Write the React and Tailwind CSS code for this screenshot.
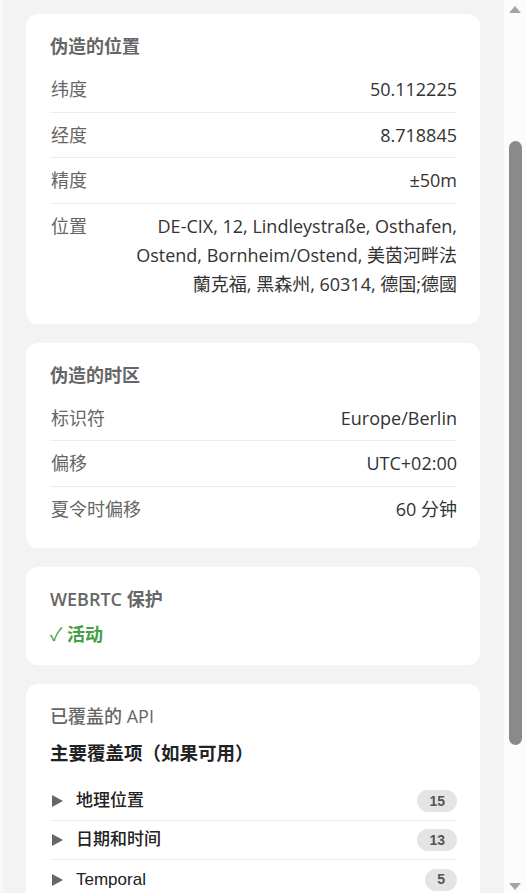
import React from 'react';

const FONT = { fontFamily: '"Open Sans", "Noto Sans CJK SC", sans-serif' };

function Card({ title, titleClass = 'font-semibold', children }) {
  return (
    <section className="bg-white rounded-[12px] pl-[24px] pr-[23px] pt-[20px] pb-[17px] shrink-0">
      <h3 className={`text-[18px] leading-[24px] text-[#666] ${titleClass}`}>{title}</h3>
      {children}
    </section>
  );
}

function Row({ label, children, last }) {
  return (
    <div
      className={`flex justify-between gap-6 py-2 text-[18px] leading-[28.5px] ${
        last ? '' : 'border-b border-[#ececec]'
      }`}
    >
      <span className="text-[#666] shrink-0 pl-[1px]">{label}</span>
      <span className="text-[#333] text-right">{children}</span>
    </div>
  );
}

function ApiItem({ name, count, last }) {
  return (
    <div
      className={`flex items-center h-[39px] pl-[2px] ${last ? '' : 'border-b border-[#ececec]'}`}
      style={{ fontFamily: '"Liberation Sans", "Noto Sans CJK SC", sans-serif' }}
    >
      <svg width="11" height="12" viewBox="0 0 11 12" className="shrink-0">
        <path d="M0 0 L11 6 L0 12 Z" fill="#666" />
      </svg>
      <span className="ml-[13px] text-[17px] font-medium text-[#222]">{name}</span>
      <span className="ml-auto h-[22px] px-3 rounded-full bg-[#e4e4e4] text-[14px] font-bold text-[#555] flex items-center">
        {count}
      </span>
    </div>
  );
}

function Scrollbar() {
  return (
    <div className="w-[22px] h-full bg-[#fcfcfc] flex flex-col items-center shrink-0">
      <svg width="12" height="7" viewBox="0 0 12 7" className="mt-[6px]">
        <path d="M0 7 L6 0 L12 7 Z" fill="#a3a3a3" />
      </svg>
      <div className="mt-[128px] w-[13px] h-[604px] rounded-full bg-[#8a8a8a]" />
      <div className="flex-1" />
      <svg width="12" height="7" viewBox="0 0 12 7" className="mb-[3px]">
        <path d="M0 0 L12 0 L6 7 Z" fill="#a3a3a3" />
      </svg>
    </div>
  );
}

export default function App() {
  return (
    <div className="w-[526px] h-[893px] overflow-hidden bg-[#f3f3f3] flex" style={FONT}>
      <div className="w-[3px] h-full bg-[#f8f8f8] shrink-0" />
      <main className="flex-1 flex flex-col gap-[19px] pl-[23px] pr-[24px] pt-[14px] overflow-hidden">
        <Card title="伪造的位置">
          <div className="mt-[9px]">
            <Row label="纬度">50.112225</Row>
            <Row label="经度">8.718845</Row>
            <Row label="精度">±50m</Row>
            <Row label="位置" last>
              <span className="block leading-[29px]">
                <span className="block">DE-CIX, 12, Lindleystraße, Osthafen,</span>
                <span className="block">Ostend, Bornheim/Ostend, 美茵河畔法</span>
                <span className="block">蘭克福, 黑森州, 60314, 德国;德國</span>
              </span>
            </Row>
          </div>
        </Card>

        <Card title="伪造的时区">
          <div className="mt-[9px]">
            <Row label="标识符">Europe/Berlin</Row>
            <Row label="偏移">UTC+02:00</Row>
            <Row label="夏令时偏移" last>60 分钟</Row>
          </div>
        </Card>

        <Card title="WEBRTC 保护">
          <p className="mt-[9px] text-[18px] leading-[28px] font-semibold text-[#43a047]">
            <span className="font-normal">✓</span> 活动
          </p>
        </Card>

        <Card title="已覆盖的 API" titleClass="font-medium">
          <h4 className="mt-[12px] text-[18.5px] leading-[26px] font-bold text-[#222]">主要覆盖项（如果可用）</h4>
          <div className="mt-[16px]">
            <ApiItem name="地理位置" count="15" />
            <ApiItem name="日期和时间" count="13" />
            <ApiItem name="Temporal" count="5" last />
          </div>
        </Card>
      </main>
      <Scrollbar />
    </div>
  );
}
